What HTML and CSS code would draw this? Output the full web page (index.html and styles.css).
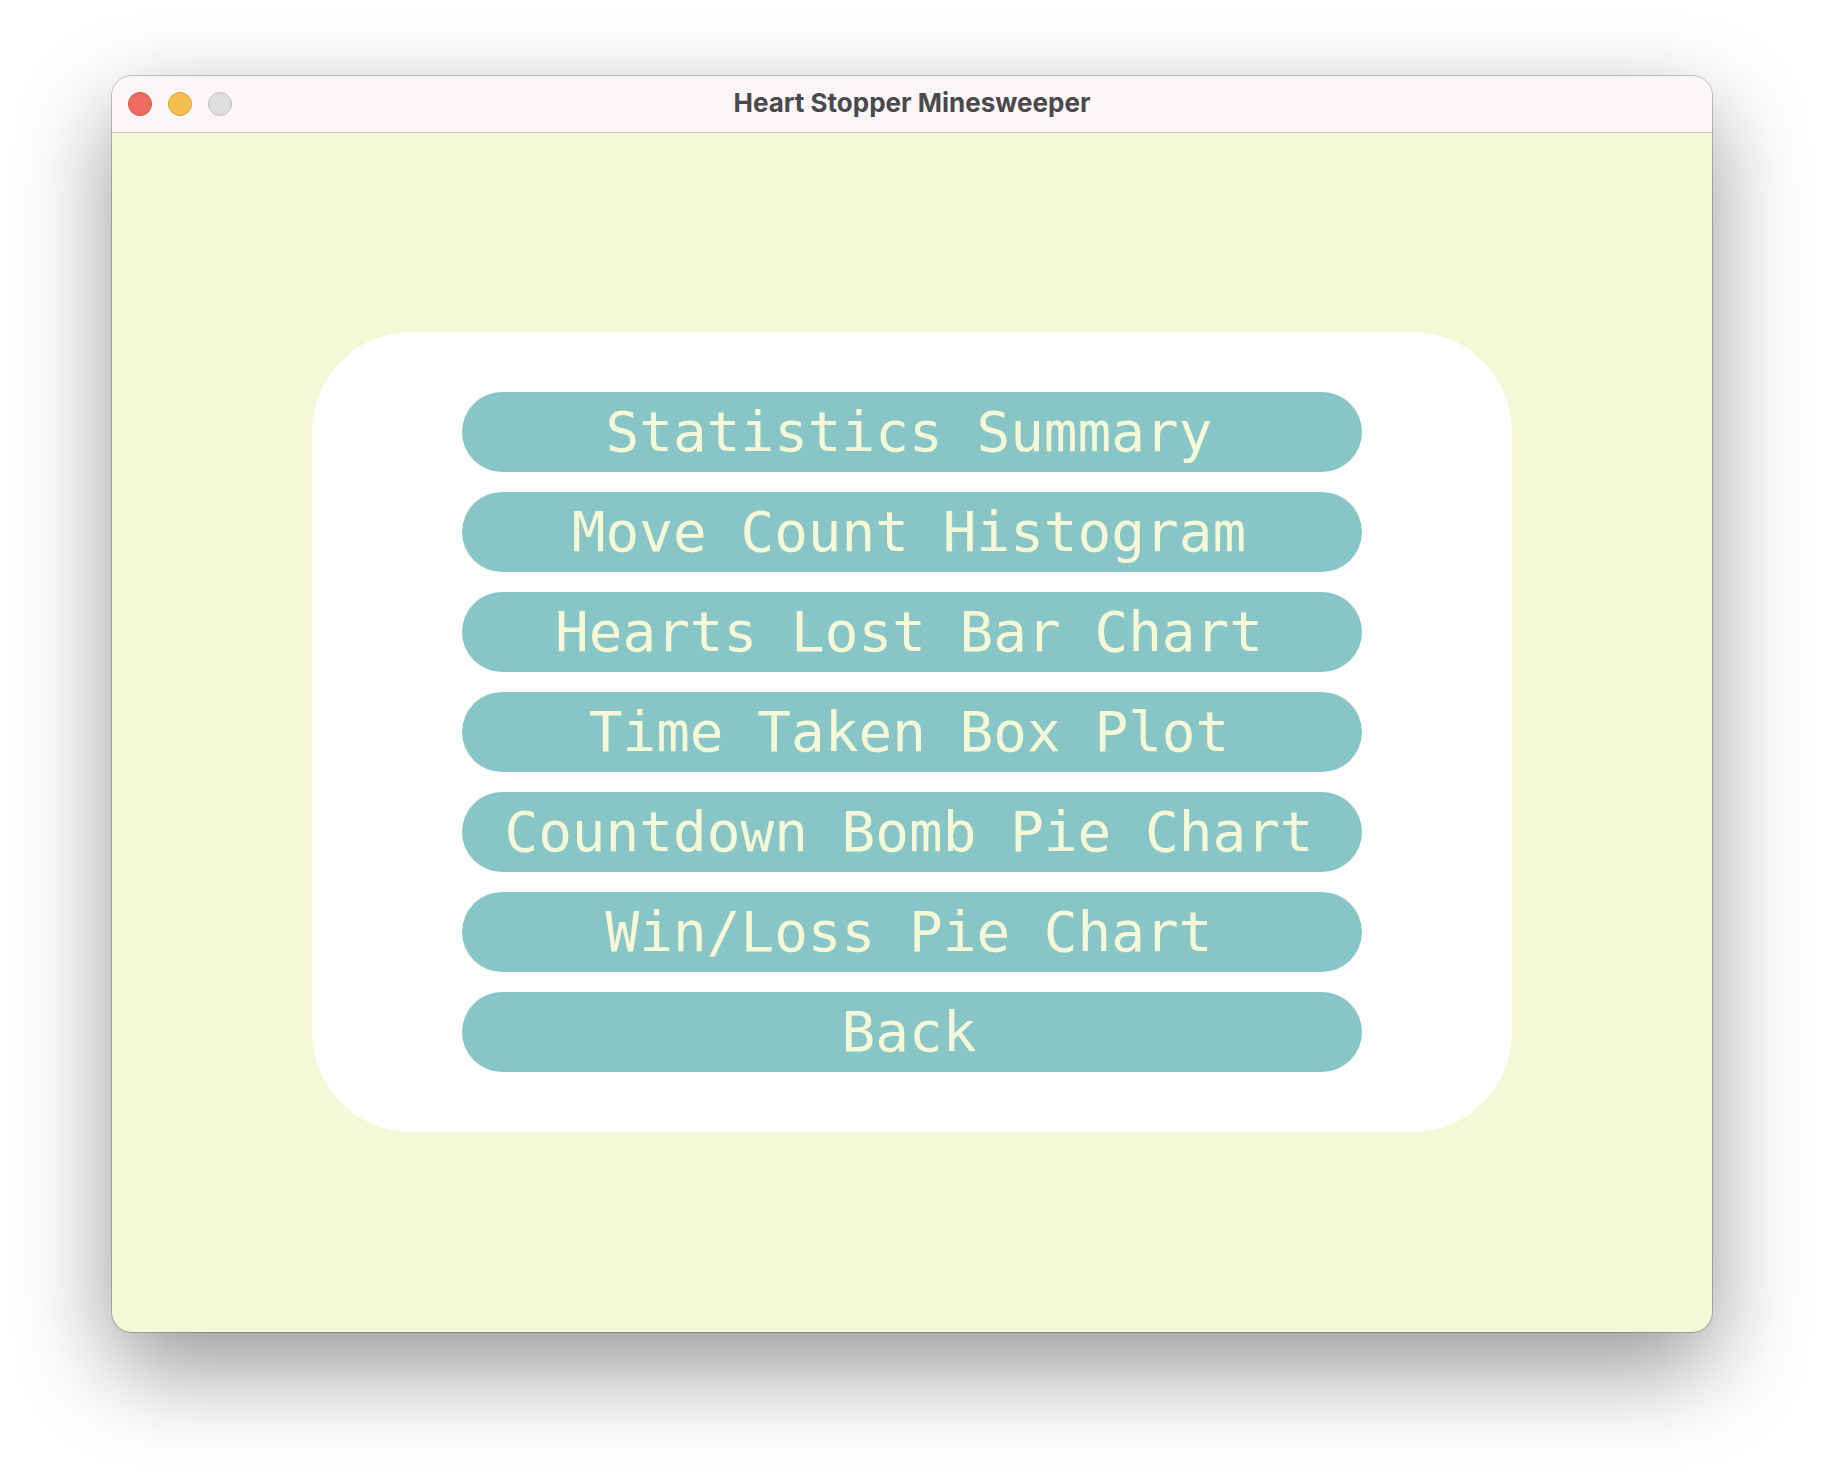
FILE: index.html
```html
<!DOCTYPE html>
<html lang="en">
<head>
<meta charset="utf-8">
<title>Heart Stopper Minesweeper</title>
<link rel="stylesheet" href="styles.css">
</head>
<body>
<div class="window">
  <header class="titlebar">
    <div class="lights">
      <button class="light light-close" type="button" aria-label="Close"></button>
      <button class="light light-minimize" type="button" aria-label="Minimize"></button>
      <button class="light light-zoom" type="button" aria-label="Zoom" disabled></button>
    </div>
    <h1 class="title">Heart Stopper Minesweeper</h1>
  </header>
  <main class="stage">
    <nav class="menu" aria-label="Statistics">
      <button class="menu-button" type="button">Statistics Summary</button>
      <button class="menu-button" type="button">Move Count Histogram</button>
      <button class="menu-button" type="button">Hearts Lost Bar Chart</button>
      <button class="menu-button" type="button">Time Taken Box Plot</button>
      <button class="menu-button" type="button">Countdown Bomb Pie Chart</button>
      <button class="menu-button" type="button">Win/Loss Pie Chart</button>
      <button class="menu-button" type="button">Back</button>
    </nav>
  </main>
</div>
</body>
</html>
```

FILE: styles.css
```css
* {
  box-sizing: border-box;
}

body {
  margin: 0;
  min-height: 100vh;
  padding: 76px 112px 148px;
  display: flex;
  background: #ffffff;
  overflow-x: hidden;
}

.window {
  flex: 1;
  display: flex;
  flex-direction: column;
  border-radius: 20px;
  overflow: hidden;
  background: #f4f8d7;
  box-shadow: 0 0 0 1px rgba(0, 0, 0, 0.22), 0 36px 96px rgba(0, 0, 0, 0.42);
}

.titlebar {
  display: grid;
  grid-template-columns: 1fr auto 1fr;
  align-items: center;
  height: 56px;
  padding: 0 16px;
  background: #faf6f8;
}

.lights {
  display: flex;
  gap: 16px;
}

.light {
  width: 24px;
  height: 24px;
  padding: 0;
  border: 1px solid;
  border-radius: 50%;
}

.light-close {
  background: #ed6b60;
  border-color: #d35045;
}

.light-minimize {
  background: #f5bf4f;
  border-color: #d6a13c;
}

.light-zoom {
  background: #dfdddf;
  border-color: #bfbdbf;
}

.title {
  margin: 0;
  padding-bottom: 2px;
  font: 700 26px/32px Inter, sans-serif;
  color: #4b494b;
}

.stage {
  flex: 1;
  display: flex;
  align-items: center;
  justify-content: center;
  box-shadow: inset 0 1px #cdd1b3;
}

.menu {
  width: 75%;
  display: flex;
  flex-direction: column;
  gap: 20px;
  padding: 60px 150px;
  border-radius: 100px;
  background: #ffffff;
}

.menu-button {
  min-height: 80px;
  padding: 0 24px 0 18px;
  border: 0;
  border-radius: 40px;
  background: #88c5c6;
  color: #f4f8d7;
  font: 400 56px/64px "DejaVu Sans Mono", monospace;
}
```
